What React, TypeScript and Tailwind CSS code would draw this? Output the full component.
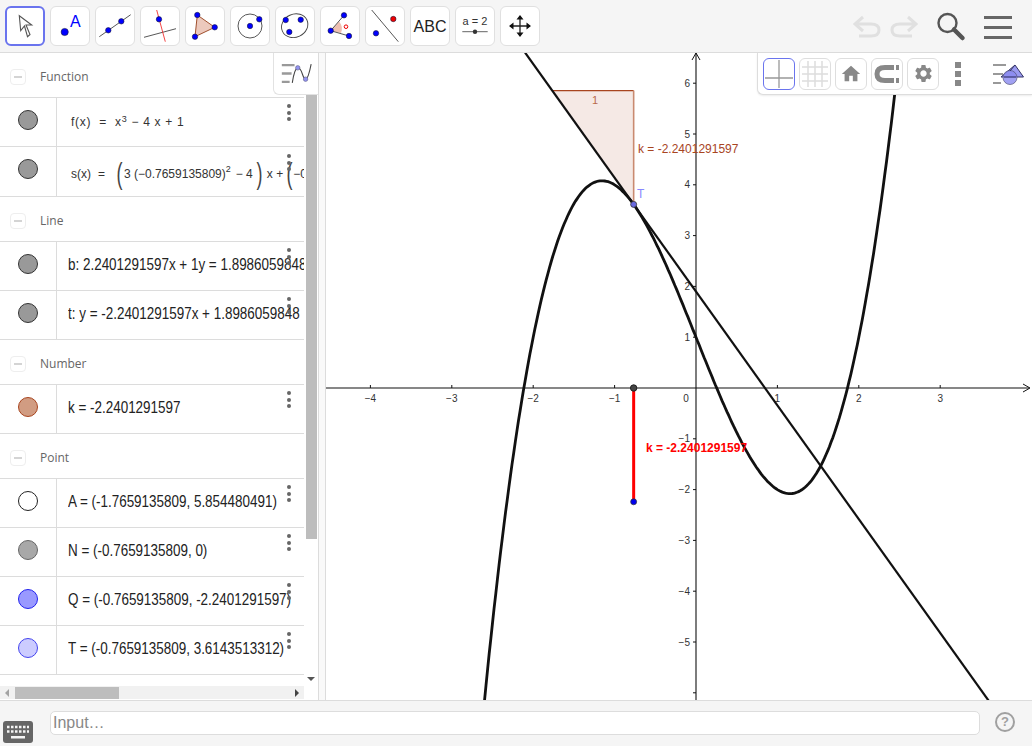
import type { ReactNode } from 'react'
import { MdHome, MdSettings } from 'react-icons/md'

const OX = 696
const OY = 388
const UX = 81.4
const UY = 50.8
const px = (x: number) => OX + x * UX
const py = (y: number) => OY - y * UY

function curvePath() {
  const pts: string[] = []
  for (let x = -2.6; x <= 2.6; x += 0.02) {
    const y = x * x * x - 4 * x + 1
    if (y > 7 || y < -6.5) continue
    pts.push(`${px(x).toFixed(1)},${py(y).toFixed(1)}`)
  }
  return 'M' + pts.join(' L')
}

function Dot({ x, y, r = 2.7, fill = '#0000ff' }: { x: number; y: number; r?: number; fill?: string }) {
  return <circle cx={x} cy={y} r={r} fill={fill} stroke="#1a1a3a" strokeWidth="0.6" />
}

const toolIcons: ReactNode[] = [
  <path d="M14.3 9.7 L15.7 24.7 L19.5 20 L22.5 30.7 L25 28.5 L21 19 L26.7 19 Z" fill="#fff" stroke="#555" strokeWidth="1.1" />,
  <>
    <Dot x={14.7} y={26} r={3.6} />
    <text x={20} y={21} fontSize="16" fill="#0000ff" fontFamily="'Liberation Sans', sans-serif">A</text>
  </>,
  <>
    <line x1="4.3" y1="30.7" x2="35.7" y2="8.7" stroke="#444" strokeWidth="0.9" />
    <Dot x={13.3} y={24.3} />
    <Dot x={26.3} y={15.3} />
  </>,
  <>
    <line x1="4" y1="31.3" x2="36" y2="22.7" stroke="#444" strokeWidth="0.9" />
    <line x1="16.7" y1="4" x2="25.3" y2="35.7" stroke="#f03030" strokeWidth="0.9" />
    <Dot x={19} y={13.3} />
  </>,
  <>
    <path d="M12.3 9 L29.7 21.3 L10 30.7 Z" fill="#ecc9bd" stroke="#a0502e" strokeWidth="1" />
    <Dot x={12.3} y={9} />
    <Dot x={29.7} y={21.3} />
    <Dot x={10} y={30.7} />
  </>,
  <>
    <circle cx="20" cy="20" r="12" fill="none" stroke="#444" strokeWidth="0.9" />
    <Dot x={20} y={20} />
    <Dot x={29.3} y={13.3} />
  </>,
  <>
    <ellipse cx="19.7" cy="19.7" rx="13.5" ry="11.5" transform="rotate(-25 19.7 19.7)" fill="none" stroke="#444" strokeWidth="0.9" />
    <Dot x={10.7} y={14} />
    <Dot x={25.7} y={13.7} />
    <Dot x={14.3} y={26} />
  </>,
  <>
    <path d="M10.7 24.7 L19 15.5 A11 11 0 0 1 21 27 Z" fill="#eec0b2" />
    <path d="M10.7 24.7 L24 9.3 M10.7 24.7 L29 30" stroke="#444" fill="none" strokeWidth="0.9" />
    <circle cx="26" cy="20.7" r="1.8" fill="none" stroke="#f00000" />
    <Dot x={10.7} y={24.7} />
    <Dot x={24} y={9.3} />
    <Dot x={29} y={30} />
  </>,
  <>
    <line x1="6.7" y1="4" x2="33.3" y2="35.7" stroke="#444" strokeWidth="0.9" />
    <Dot x={28.3} y={13} fill="#f00000" />
    <Dot x={11} y={27.3} />
  </>,
  <text x="20" y="25.5" fontSize="16" textAnchor="middle" fill="#222" fontFamily="'Liberation Sans', sans-serif">ABC</text>,
  <>
    <text x="20" y="19" fontSize="11" textAnchor="middle" fill="#333" fontFamily="'Liberation Sans', sans-serif">a = 2</text>
    <line x1="7.3" y1="25.7" x2="32.7" y2="25.7" stroke="#666" />
    <circle cx="20" cy="25.7" r="2.2" fill="#333" />
  </>,
  <>
    <path d="M20 10 V30 M10 20 H30" stroke="#222" strokeWidth="1.3" />
    <path d="M20 9 L16.5 13.5 H23.5 Z M20 31 L16.5 26.5 H23.5 Z M9 20 L13.5 16.5 V23.5 Z M31 20 L26.5 16.5 V23.5 Z" fill="#111" />
  </>,
]

function Header({ label }: { label: string }) {
  return (
    <div className="flex h-[45px] shrink-0 items-center border-b border-[#dcdcdc] pt-[3px]">
      <div className="ml-[10px] flex h-[16px] w-[16px] items-center justify-center rounded-[4px] border border-[#eeeeee]">
        <div className="h-[2px] w-[8px] bg-[#d4d4d4]" />
      </div>
      <span className="ml-[14px] font-['Open_Sans',sans-serif] text-[12px] text-[#666666]">{label}</span>
    </div>
  )
}

function Row({ marble, children, tall, math }: { marble: string; children: ReactNode; tall?: boolean; math?: boolean }) {
  return (
    <div className={`relative flex shrink-0 overflow-hidden border-b border-[#dcdcdc] ${tall ? 'h-[50px]' : 'h-[49px]'}`}>
      <div className="flex w-[57px] shrink-0 justify-center border-r border-[#dcdcdc] pt-[12px]">
        <div className={`h-[20px] w-[20px] rounded-full border ${marble}`} />
      </div>
      <div className={`flex min-w-0 flex-1 items-center whitespace-nowrap ${math ? 'pl-[14px]' : 'pb-[3px] pl-[11px]'} ${tall ? 'pt-[4px]' : ''}`}>{children}</div>
      <div className={`absolute right-[13px] flex flex-col gap-[2.5px] ${tall ? 'top-[7px]' : 'top-[6px]'}`}>
        <span className="h-[4px] w-[4px] rounded-full bg-[#666666]" />
        <span className="h-[4px] w-[4px] rounded-full bg-[#666666]" />
        <span className="h-[4px] w-[4px] rounded-full bg-[#666666]" />
      </div>
    </div>
  )
}

function Plain({ children }: { children: ReactNode }) {
  return <span className="origin-left scale-x-[0.84] font-['Liberation_Sans',sans-serif] text-[16px] text-[#222222]">{children}</span>
}

function BigParen({ children, className }: { children: string; className: string }) {
  return <span className={`inline-block w-[7px] scale-x-[0.6] text-center text-[30px] font-light leading-none text-[#444444] ${className}`}>{children}</span>
}

function AlgebraPanel() {
  const mathCls = "font-['Liberation_Sans',sans-serif] text-[12px] text-[#333333]"
  return (
    <div className="relative flex w-[318px] shrink-0 flex-col">
      <div className="flex min-h-0 flex-1">
        <div className="flex w-[304px] flex-col overflow-hidden">
          <Header label="Function" />
          <Row marble="bg-[#999999] border-[#333333]" math>
            <span className={`${mathCls} tracking-[0.7px]`}>f(x) &nbsp;=&nbsp; x<sup className="text-[9px]">3</sup> − 4 x + 1</span>
          </Row>
          <Row marble="bg-[#999999] border-[#333333]" math tall>
            <span className={`${mathCls} flex items-center`}>
              <span className="w-[27px]">s(x)</span>
              <span className="w-[17px]">=</span>
              <BigParen className="mr-[1px]">(</BigParen>
              <span className="ml-[1px]">3 (−0.7659135809)</span>
              <sup className="text-[9px]">2</sup>
              <span className="ml-[5px]">− 4</span>
              <BigParen className="ml-[2px]">)</BigParen>
              <span className="ml-[5px]">x +</span>
              <BigParen className="ml-[2px]">(</BigParen>
              <span className="ml-[1px]">−0</span>
            </span>
          </Row>
          <Header label="Line" />
          <Row marble="bg-[#999999] border-[#333333]"><Plain>b: 2.2401291597x + 1y = 1.8986059848</Plain></Row>
          <Row marble="bg-[#999999] border-[#333333]"><Plain>t: y = -2.2401291597x + 1.8986059848</Plain></Row>
          <Header label="Number" />
          <Row marble="bg-[#d19c82] border-[#a8451f]"><Plain>k = -2.2401291597</Plain></Row>
          <Header label="Point" />
          <Row marble="bg-white border-[#222222]"><Plain>A = (-1.7659135809, 5.854480491)</Plain></Row>
          <Row marble="bg-[#a8a8a8] border-[#666666]"><Plain>N = (-0.7659135809, 0)</Plain></Row>
          <Row marble="bg-[#9999ff] border-[#2222ee]"><Plain>Q = (-0.7659135809, -2.2401291597)</Plain></Row>
          <Row marble="bg-[#ccccff] border-[#4444ee]"><Plain>T = (-0.7659135809, 3.6143513312)</Plain></Row>
        </div>
        {/* vertical scrollbar */}
        <div className="flex w-[14px] shrink-0 flex-col items-center pt-[42px]">
          <div className="h-[444px] w-[11px] bg-[#bdbdbd]" />
          <div className="mt-auto mb-[5px] h-0 w-0 border-x-[4px] border-t-[4px] border-x-transparent border-t-[#555555]" />
        </div>
      </div>
      {/* horizontal scrollbar */}
      <div className="mb-[1px] flex h-[13px] w-[304px] shrink-0 items-center bg-[#f1f1f1]">
        <div className="ml-[5px] h-0 w-0 border-y-[4px] border-r-[4px] border-y-transparent border-r-[#a3a3a3]" />
        <div className="ml-[6px] h-[12px] w-[104px] bg-[#bdbdbd]" />
        <div className="ml-auto mr-[5px] h-0 w-0 border-y-[4px] border-l-[4px] border-y-transparent border-l-[#444444]" />
      </div>
      {/* algebra style toggle */}
      <div className="absolute right-0 top-0 flex h-[42px] w-[45px] items-center justify-center rounded-bl-[6px] border-b border-l border-[#e2e2e2] bg-white">
        <svg width="45" height="42" viewBox="273 53 45 42">
          <path d="M281 65 H294 M281 73.5 H291 M281 82 H289" stroke="#999999" strokeWidth="2.4" />
          <path d="M291.7 83 Q294 68 297.3 67.7 Q300 68 302 74 Q304 80 305.5 79.3 Q308 79 311 64" stroke="#444444" strokeWidth="1.1" fill="none" />
          <circle cx="297.3" cy="67.7" r="2.3" fill="#9393ee" stroke="#555577" strokeWidth="0.5" />
          <circle cx="305.3" cy="79.3" r="2.3" fill="#9393ee" stroke="#555577" strokeWidth="0.5" />
        </svg>
      </div>
    </div>
  )
}

function Graph() {
  const xLabels = [-4, -3, -2, -1, 1, 2, 3]
  const yLabels = [-5, -4, -3, -2, -1, 1, 2, 3, 4, 5, 6]
  const xT = -0.7659135809
  const tangent = (x: number) => -2.2401291597 * x + 1.8986059848
  return (
    <svg className="block h-full w-full" viewBox="326 53 706 647" fontFamily="'Liberation Sans', sans-serif">
      {/* slope triangle */}
      <path d={`M${px(-1.7659)} ${py(5.8545)} H${px(xT)} V${py(3.6143)} Z`} fill="#f5e9e5" />
      <line x1={px(-1.7659)} y1={py(5.8545)} x2={px(xT)} y2={py(5.8545)} stroke="#a8451f" strokeWidth="1.3" />
      <line x1={px(xT)} y1={py(5.8545)} x2={px(xT)} y2={py(3.6143)} stroke="#c98a70" strokeWidth="1.6" />
      <text x="595" y="104" fontSize="11" textAnchor="middle" fill="#b86a4c">1</text>

      {/* axes */}
      <line x1="326" y1={OY} x2="1029" y2={OY} stroke="#111" strokeWidth="1.1" />
      <line x1={OX} y1="53" x2={OX} y2="700" stroke="#111" strokeWidth="1.1" />
      <path d="M1023 384 L1030 388 L1023 392" fill="none" stroke="#111" />
      <path d="M692 60 L696 53 L700 60" fill="none" stroke="#111" />
      {xLabels.map((v) => (
        <g key={v}>
          <line x1={px(v)} y1={OY - 3} x2={px(v)} y2={OY} stroke="#111" />
          <text x={px(v)} y="402" fontSize="10" textAnchor="middle" fill="#333">{v < 0 ? `−${-v}` : v}</text>
        </g>
      ))}
      <text x="686" y="402" fontSize="10" textAnchor="middle" fill="#333">0</text>
      {yLabels.map((v) => (
        <g key={v}>
          <line x1={OX - 3} y1={py(v)} x2={OX} y2={py(v)} stroke="#111" />
          <text x={OX - 6} y={py(v) + 3.5} fontSize="10" textAnchor="end" fill="#333">{v < 0 ? `−${-v}` : v}</text>
        </g>
      ))}
      <line x1={OX - 3} y1={py(-6)} x2={OX} y2={py(-6)} stroke="#111" />

      {/* curves */}
      <line x1={px(-2.1)} y1={py(tangent(-2.1))} x2={px(3.65)} y2={py(tangent(3.65))} stroke="#111" strokeWidth="2.2" />
      <path d={curvePath()} fill="none" stroke="#111" strokeWidth="2.8" />

      {/* segment and points */}
      <line x1={px(xT)} y1={OY} x2={px(xT)} y2={py(-2.24)} stroke="#ff0000" strokeWidth="3" />
      <circle cx={px(xT)} cy={OY} r="3.2" fill="#444" stroke="#222" />
      <circle cx={px(xT)} cy={py(-2.24)} r="3" fill="#0000ee" stroke="#333" strokeWidth="0.7" />
      <circle cx={px(xT)} cy={py(3.6143)} r="3" fill="#6a6ae0" stroke="#333" strokeWidth="0.8" />

      <text x="637" y="198" fontSize="12" fill="#8888ff">T</text>
      <text x="638" y="153" fontSize="12" fill="#a8451f">k = -2.2401291597</text>
      <text x="646" y="452" fontSize="12" fontWeight="bold" fill="#ff0000">k = -2.2401291597</text>
    </svg>
  )
}

function StyleBtn({ children, active }: { children: ReactNode; active?: boolean }) {
  return (
    <div className={`flex h-[32px] w-[32px] items-center justify-center rounded-[6px] border bg-white ${active ? 'border-[#6a74ee]' : 'border-[#dedede]'}`}>
      {children}
    </div>
  )
}

function StyleBar() {
  return (
    <div className="absolute right-0 top-0 flex h-[42px] w-[275px] items-center gap-[4px] rounded-bl-[6px] border-b border-l border-[#dddddd] bg-white pl-[5px] shadow-[0_1px_2px_rgba(0,0,0,0.08)]">
      <StyleBtn active>
        <svg width="30" height="30" viewBox="0 0 30 30"><path d="M15 1 V29 M1 19 H29" stroke="#999999" strokeWidth="1.3" /></svg>
      </StyleBtn>
      <StyleBtn>
        <svg width="30" height="30" viewBox="0 0 30 30"><path d="M8 2 V28 M15 2 V28 M22 2 V28 M2 8 H28 M2 15 H28 M2 22 H28" stroke="#dddddd" strokeWidth="1.5" /></svg>
      </StyleBtn>
      <StyleBtn><MdHome size={22} color="#888888" /></StyleBtn>
      <StyleBtn>
        <svg width="30" height="30" viewBox="0 0 30 30">
          <path d="M22 8.5 H13 Q5 8.5 5 15 Q5 21.5 13 21.5 H22" fill="none" stroke="#888888" strokeWidth="5" />
          <path d="M24 6 H27 V11 H24 Z M24 19 H27 V24 H24 Z" fill="#888888" />
        </svg>
      </StyleBtn>
      <StyleBtn><MdSettings size={21} color="#888888" /></StyleBtn>
      <div className="ml-[12px] flex flex-col gap-[3px]">
        <span className="h-[6px] w-[6px] bg-[#888888]" />
        <span className="h-[6px] w-[6px] bg-[#888888]" />
        <span className="h-[6px] w-[6px] bg-[#888888]" />
      </div>
      <svg className="ml-[26px]" width="34" height="30" viewBox="991 59 34 30">
        <path d="M993 65 H1006 M993 74 H1003 M993 83 H1001" stroke="#999999" strokeWidth="2" />
        <path d="M1015 65 L1023.5 77 H1001 Z" fill="#9a9af0" stroke="#333366" strokeWidth="1" />
        <circle cx="1010" cy="77.5" r="7" fill="#8a8af0" fillOpacity="0.8" stroke="#555577" strokeWidth="0.7" />
        <path d="M1004 77 H1016 M1010 71 L1015 65" stroke="#333366" strokeWidth="1" />
      </svg>
    </div>
  )
}

function TopBar() {
  return (
    <div className="flex h-[53px] shrink-0 items-start border-b border-[#dcdcdc] bg-[#f5f5f5] pl-[5px] pt-[6px]">
      <div className="flex gap-[5px]">
        {toolIcons.map((icon, i) => (
          <div
            key={i}
            className={`h-[40px] w-[40px] rounded-[6px] bg-white ${i === 0 ? 'border-2 border-[#6a74ee]' : 'border border-[#e0e0e0]'}`}
          >
            <svg className={i === 0 ? '-m-[2px]' : '-m-px'} width="40" height="40" viewBox="0 0 40 40">{icon}</svg>
          </div>
        ))}
      </div>
      <div className="ml-auto flex items-center pr-[20px] pt-[6px]">
        <svg width="28" height="24" viewBox="0 0 28 24">
          <path d="M2 9 H18 Q26 9 26 15 Q26 21 18 21 H6 M10 2 L2 9 L10 16" fill="none" stroke="#e0e0e0" strokeWidth="3" />
        </svg>
        <svg className="ml-[9px]" width="28" height="24" viewBox="0 0 28 24">
          <path d="M26 9 H10 Q2 9 2 15 Q2 21 10 21 H22 M18 2 L26 9 L18 16" fill="none" stroke="#e0e0e0" strokeWidth="3" />
        </svg>
        <svg className="ml-[18px]" width="30" height="30" viewBox="0 0 30 30">
          <circle cx="11.5" cy="11" r="9" fill="none" stroke="#555555" strokeWidth="2.4" />
          <path d="M18 17.5 L26.5 26" stroke="#555555" strokeWidth="4.5" strokeLinecap="round" />
        </svg>
        <div className="ml-[18px] flex w-[28px] flex-col gap-[7px]">
          <span className="h-[3px] bg-[#666666]" />
          <span className="h-[3px] bg-[#666666]" />
          <span className="h-[3px] bg-[#666666]" />
        </div>
      </div>
    </div>
  )
}

function BottomBar() {
  return (
    <div className="flex h-[46px] shrink-0 items-start border-t border-[#dcdcdc] bg-[#f5f5f5] font-['Liberation_Sans',sans-serif]">
      <svg className="ml-[3px] mt-[20px]" width="30" height="22" viewBox="0 0 30 22">
        <rect width="30" height="22" rx="3" fill="#666666" />
        <path d="M4 6 H26 M4 10.5 H26" stroke="#f5f5f5" strokeWidth="2.5" strokeDasharray="2.5 1.5" />
        <rect x="8" y="15" width="14" height="2.5" fill="#f5f5f5" />
      </svg>
      <div className="ml-[17px] mt-[10px] flex h-[24px] w-[930px] items-center rounded-[5px] border border-[#dddddd] bg-white pl-[2px] text-[16px] text-[#888888]">
        Input…
      </div>
      <div className="ml-[15px] mt-[11px] flex h-[20px] w-[20px] items-center justify-center rounded-full border-2 border-[#a0a0a0] text-[13px] font-bold text-[#a0a0a0]">
        ?
      </div>
    </div>
  )
}

export default function App() {
  return (
    <div className="flex h-[746px] w-[1032px] flex-col overflow-hidden bg-white">
      <TopBar />
      <div className="flex min-h-0 flex-1">
        <AlgebraPanel />
        <div className="w-[8px] shrink-0 border-x border-[#dcdcdc] bg-[#f9f9f9]" />
        <div className="relative min-w-0 flex-1">
          <Graph />
          <StyleBar />
        </div>
      </div>
      <BottomBar />
    </div>
  )
}
